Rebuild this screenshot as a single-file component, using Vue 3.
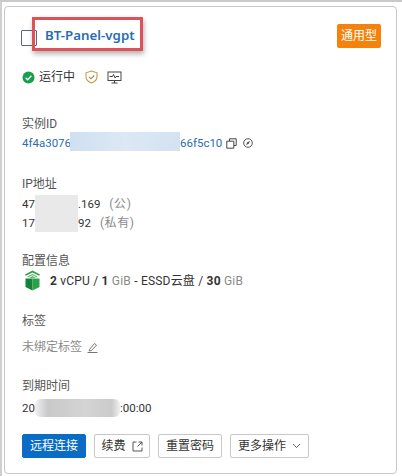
<script setup>
const spec = [
  { text: '2', strong: true },
  { text: ' vCPU / ' },
  { text: '1', strong: true },
  { text: ' GiB', muted: true },
  { text: ' - ESSD云盘 / ' },
  { text: '30', strong: true },
  { text: ' GiB', muted: true },
]
</script>

<template>
  <div class="frame">
    <section class="card">
      <header class="head">
        <span class="check"></span>
        <a class="name">BT-Panel-vgpt</a>
        <span class="callout"></span>
        <span class="badge">通用型</span>
      </header>

      <div class="status">
        <svg class="dot" width="13" height="13" viewBox="0 0 13 13">
          <circle cx="6.500" cy="6.500" r="6" fill="#15a04a" />
          <path d="M3.600 6.700l2 2 3.800-3.900" fill="none" stroke="#fff" stroke-width="1.300" />
        </svg>
        <span class="cjk">运行中</span>
        <svg class="shield" width="13" height="14" viewBox="0 0 13 14">
          <path d="M6.500 1L12 2.800v4c0 3-2.300 5-5.500 6.200C3.300 11.800 1 9.800 1 6.800v-4z" fill="none" stroke="#b9a23f" stroke-width="1.100" />
          <path d="M4 6.800l2 2 3.200-3.300" fill="none" stroke="#8f8a45" stroke-width="1.100" />
        </svg>
        <svg class="screen" width="15" height="13" viewBox="0 0 15 13">
          <rect x="1" y="1" width="13" height="8.500" fill="none" stroke="#444" stroke-width="1" />
          <path d="M2.500 5.500h3l1-2 1.500 3.500 1-1.500h3M4.500 12h6M7.500 9.500V12" fill="none" stroke="#444" stroke-width="1" />
        </svg>
      </div>

      <div class="field field-id">
        <div class="label">实例ID</div>
        <div class="value idline">
          <a class="link first">4f4a3076</a>
          <a class="link last">66f5c10</a>
          <svg class="copy" width="11" height="11" viewBox="0 0 11 11">
            <path d="M3.500 3V.8h6.700v6.700H8M.8 3.200h7v7h-7z" fill="none" stroke="#444" stroke-width="1" />
          </svg>
          <svg class="compass" width="10" height="10" viewBox="0 0 10 10">
            <circle cx="5" cy="5" r="4.300" fill="none" stroke="#555" stroke-width="1" />
            <path d="M7 3L5.800 5.800 3 7l1.200-2.800z" fill="#555" />
          </svg>
          <span class="blur-id"></span>
        </div>
      </div>

      <div class="field field-ip">
        <div class="label">IP地址</div>
        <div class="iplist">
          <div class="value">47<span class="ipgap-a"></span>.169<span class="muted paren">(公)</span></div>
          <div class="value">17<span class="ipgap-b"></span>92<span class="muted paren">(私有)</span></div>
          <span class="blur-ip"></span>
        </div>
      </div>

      <div class="field field-spec">
        <div class="label">配置信息</div>
        <div class="value specline">
          <svg class="cube" width="17" height="21" viewBox="0 0 17 21">
            <path d="M8.500 0.500L16 4.500l-.8 1.200-6.700-3.300-6.700 3.300L1 4.500z" fill="#2f9e44" />
            <path d="M8.500 3.800l5.200 2.700-.8.900-4.400-2.200-4.400 2.200-.8-.9z" fill="#6fbf7c" />
            <path d="M8.500 6.200l3.500 1.600H5z" fill="#2f9e44" />
            <path d="M1.500 8.500h7v12l-7-3.600z" fill="#17803a" />
            <path d="M8.500 8.500h7v8.400l-7 3.600z" fill="#2ba04a" />
          </svg>
          <span class="spectext"><span v-for="(part, i) in spec" :key="i" :class="{ strong: part.strong, muted: part.muted }">{{ part.text }}</span></span>
        </div>
      </div>

      <div class="field field-tag">
        <div class="label">标签</div>
        <div class="value tagline">
          <span class="muted cjk">未绑定标签</span>
          <svg width="11" height="11" viewBox="0 0 11 11">
            <path d="M2.500 7.500L7.500 1.500l2 1.700-5 5.300-2.300.5zM.5 10.500h10" fill="none" stroke="#666" stroke-width=".9" />
          </svg>
        </div>
      </div>

      <div class="field field-exp">
        <div class="label">到期时间</div>
        <div class="value expline">20<span class="expgap"></span>:00:00<span class="blur-exp"></span></div>
      </div>

      <div class="actions">
        <button class="btn primary">远程连接</button>
        <button class="btn renew">续费
          <svg width="11" height="11" viewBox="0 0 11 11">
            <path d="M4.500 1H1v9h9V6.500M6.500 1H10v3.500M10 1L5.500 5.500" fill="none" stroke="#555" stroke-width="1" />
          </svg>
        </button>
        <button class="btn reset">重置密码</button>
        <button class="btn more">更多操作
          <svg width="9" height="6" viewBox="0 0 9 6">
            <path d="M1 1l3.500 3.500L8 1" fill="none" stroke="#666" stroke-width="1" />
          </svg>
        </button>
      </div>
    </section>
  </div>
</template>

<style>
html, body { margin: 0; background: #fff; }
</style>

<style scoped>
.frame {
  width: 402px;
  height: 476px;
  box-sizing: border-box;
  padding: 4px 4px 2px 2px;
  border-top: 2px solid #c9c9cc;
  border-left: 2px solid #d0d0d2;
  font-family: Roboto, "Noto Sans CJK SC", sans-serif;
  font-size: 12px;
  line-height: 18px;
  color: #333;
  overflow: hidden;
}
.card {
  width: 393px;
  height: 468px;
  box-sizing: border-box;
  border: 1px solid #c8c8c8;
  border-radius: 4px;
  padding: 0 16px 0 17px;
  display: flex;
  flex-direction: column;
}
.head {
  position: relative;
  display: flex;
  align-items: center;
  height: 24px;
  margin-top: 17px;
}
.check {
  width: 14px;
  height: 14px;
  border: 1px solid #5b6577;
  border-radius: 1px;
  flex: none;
  margin-top: 4px;
  margin-left: -1px;
}
.name {
  margin-left: 8px;
  margin-top: -3px;
  font-family: "Noto Sans", sans-serif;
  font-size: 13.300px;
  font-weight: 600;
  color: #2a6db0;
}
.callout {
  position: absolute;
  left: 10px;
  top: -7px;
  width: 105px;
  height: 28px;
  border: 3px solid #dc5257;
  box-shadow: 1px 3px 5px rgba(0, 0, 0, .3);
}
.badge {
  margin-left: auto;
  width: 44px;
  height: 24px;
  margin-right: -1px;
  background: #f5820d;
  border-radius: 2px;
  color: #fff;
  text-align: center;
  line-height: 24px;
}
.status {
  display: flex;
  align-items: center;
  height: 18px;
  margin-top: 20px;
  gap: 4px;
}
.shield { margin-left: 6px; }
.screen { margin-left: 5px; }
.field { display: flex; flex-direction: column; }
.label { color: #555; height: 18px; }
.value { height: 18px; white-space: nowrap; position: relative; font-size: 11.500px; }
.cjk { font-size: 12px; }
.field-id { margin-top: 29px; }
.field-ip { margin-top: 23px; }
.field-spec { margin-top: 20px; }
.field-tag { margin-top: 21px; }
.field-exp { margin-top: 21px; }
.field-id .value { margin-top: 1px; display: flex; align-items: center; }
.link { color: #2a6db0; }
.first { width: 48px; flex: none; }
.last { margin-left: 110px; width: 41px; flex: none; }
.copy { margin-left: 5px; }
.compass { margin-left: 6px; }
.blur-id {
  position: absolute;
  left: 48px;
  top: -2px;
  width: 110px;
  height: 19px;
  background: linear-gradient(90deg, #cfe0f1, #dce8f4 50%, #d3e2f1);
}
.iplist { position: relative; margin-top: 2px; display: flex; flex-direction: column; gap: 1px; }
.ipgap-a { display: inline-block; width: 43px; }
.ipgap-b { display: inline-block; width: 43px; }
.paren { margin-left: 9px; font-size: 12px; letter-spacing: .6px; }
.blur-ip {
  position: absolute;
  left: 13px;
  top: 0;
  width: 43px;
  height: 37px;
  background: #e9e9e9;
}
.muted { color: #8a8a8a; }
.specline { display: flex; align-items: center; height: 21px; margin-top: 0; font-size: 12px; letter-spacing: .2px; }
.cube { margin-left: 2px; flex: none; }
.spectext { margin-left: 9px; }
.strong { font-weight: 700; color: #333; }
.field-tag .value { margin-top: 8px; }
.tagline { display: flex; align-items: center; gap: 5px; }
.field-exp .value { margin-top: 4px; }
.expgap { display: inline-block; width: 85px; }
.blur-exp {
  position: absolute;
  left: 13px;
  top: 0;
  width: 85px;
  height: 18px;
  border-radius: 6px;
  background: linear-gradient(90deg, #f0f0f0, #c9c9c9 15%, #d4d4d4 60%, #cbcbcb 90%, #f0f0f0);
}
.actions {
  display: flex;
  gap: 8px;
  margin-top: 17px;
}
.btn {
  height: 24px;
  box-sizing: border-box;
  border: 1px solid #c8c8c8;
  border-radius: 2px;
  background: #fff;
  color: #333;
  font: inherit;
  padding: 0;
  display: flex;
  align-items: center;
  justify-content: center;
  gap: 6px;
}
.primary { width: 64px; background: #0a6cc4; border-color: #0a6cc4; color: #fff; }
.renew { width: 56px; }
.reset { width: 64px; }
.more { width: 79px; }
</style>
